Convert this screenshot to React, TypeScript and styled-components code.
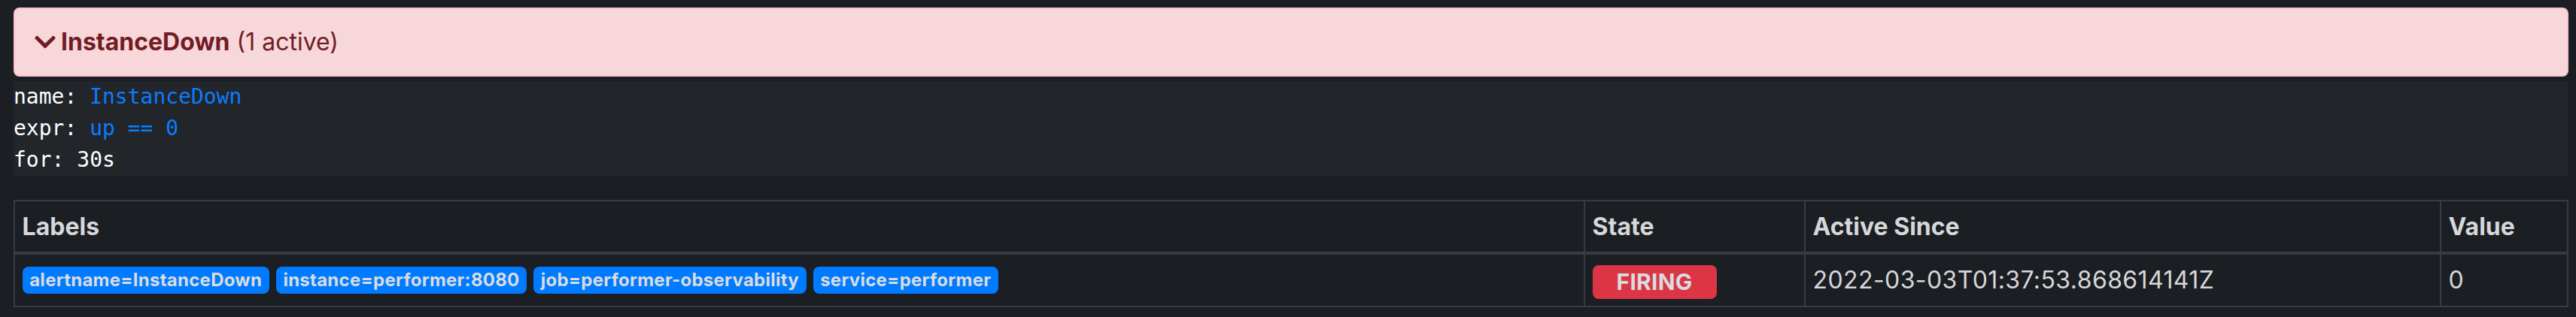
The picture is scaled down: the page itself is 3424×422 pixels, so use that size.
import styled, { createGlobalStyle } from 'styled-components'

const GlobalStyle = createGlobalStyle`
  * {
    box-sizing: border-box;
  }
  body {
    margin: 0;
    background: #1b1e22;
    color: #d6d7d9;
    font-family: Inter, 'Noto Sans', 'Liberation Sans', sans-serif;
    font-size: 32px;
    line-height: 48px;
  }
`

const labels = [
  'alertname=InstanceDown',
  'instance=performer:8080',
  'job=performer-observability',
  'service=performer',
]

const ChevronDown = () => (
  <StyledChevron viewBox='0 0 448 512' aria-hidden='true'>
    <path
      fill='currentColor'
      d='M207.029 381.476L12.686 187.132c-9.373-9.373-9.373-24.569 0-33.941l22.667-22.667c9.357-9.357 24.522-9.375 33.901-.04L224 284.505l154.745-154.021c9.379-9.335 24.544-9.317 33.901.04l22.667 22.667c9.373 9.373 9.373 24.569 0 33.941L240.971 381.476c-9.373 9.372-24.569 9.372-33.942 0z'
    />
  </StyledChevron>
)

const RuleLine = ({ name, value }: { name: string; value?: string }) => (
  <div>
    {name}: {value ? <StyledRuleValue>{value}</StyledRuleValue> : null}
  </div>
)

export const App = () => {
  return (
    <>
      <GlobalStyle />
      <StyledPage>
        <StyledAlertHeader>
          <ChevronDown />
          <strong>InstanceDown</strong> (1 active)
        </StyledAlertHeader>
        <StyledRule>
          <RuleLine name='name' value='InstanceDown' />
          <RuleLine name='expr' value='up == 0' />
          <div>for: 30s</div>
        </StyledRule>
        <StyledTable>
          <thead>
            <tr>
              <StyledTh>Labels</StyledTh>
              <StyledTh $width={293}>State</StyledTh>
              <StyledTh $width={845}>Active Since</StyledTh>
              <StyledTh $width={169}>Value</StyledTh>
            </tr>
          </thead>
          <tbody>
            <tr>
              <StyledTd>
                <StyledLabelList>
                  {labels.map((label) => (
                    <StyledBadge key={label}>{label}</StyledBadge>
                  ))}
                </StyledLabelList>
              </StyledTd>
              <StyledTd>
                <StyledStateBadge>firing</StyledStateBadge>
              </StyledTd>
              <StyledTd>2022-03-03T01:37:53.868614141Z</StyledTd>
              <StyledTd>0</StyledTd>
            </tr>
          </tbody>
        </StyledTable>
      </StyledPage>
    </>
  )
}

export default App

const StyledPage = styled.div`
  padding: 10px 10px 0 18px;
`

const StyledAlertHeader = styled.div`
  display: flex;
  align-items: center;
  height: 92px;
  padding: 0 26px;
  background: #f8d7da;
  border: 2px solid #f5c6cb;
  border-radius: 8px;
  color: #721c24;
  white-space: pre;

  strong {
    font-weight: 700;
  }
`

const StyledChevron = styled.svg`
  width: 28px;
  height: 32px;
  margin-right: 7px;
  flex-shrink: 0;
`

const StyledRule = styled.pre`
  margin: 6px 0 32px;
  background: #222529;
  color: #ffffff;
  font-family: 'DejaVu Sans Mono', 'Liberation Mono', monospace;
  font-size: 28px;
  line-height: 42px;
`

const StyledRuleValue = styled.span`
  color: #0a7dff;
`

const StyledTable = styled.table`
  width: 100%;
  border-collapse: collapse;
  table-layout: fixed;
`

const StyledTh = styled.th<{ $width?: number }>`
  ${({ $width }) => ($width ? `width: ${$width}px;` : '')}
  padding: 9.6px;
  border: 2px solid #383b3f;
  border-bottom-width: 4px;
  text-align: left;
  font-weight: 700;
  color: #d6d7d9;
  vertical-align: bottom;
`

const StyledTd = styled.td`
  padding: 9.6px;
  border: 2px solid #383b3f;
  color: #d6d7d9;
  letter-spacing: 0.4px;
  vertical-align: top;
`

const StyledLabelList = styled.div`
  display: flex;
  flex-wrap: wrap;
  align-items: center;
  gap: 9px;
  height: 48px;
`

const StyledBadge = styled.span`
  display: inline-block;
  padding: 6px 9.6px;
  background: #007bff;
  border-radius: 8px;
  color: #d9dbde;
  font-size: 24px;
  font-weight: 700;
  line-height: 24px;
  letter-spacing: 0.25px;
  white-space: nowrap;
`

const StyledStateBadge = styled(StyledBadge)`
  padding: 7.5px 32px;
  background: #dc3545;
  font-size: 30px;
  line-height: 30px;
  text-transform: uppercase;
  vertical-align: middle;
`
